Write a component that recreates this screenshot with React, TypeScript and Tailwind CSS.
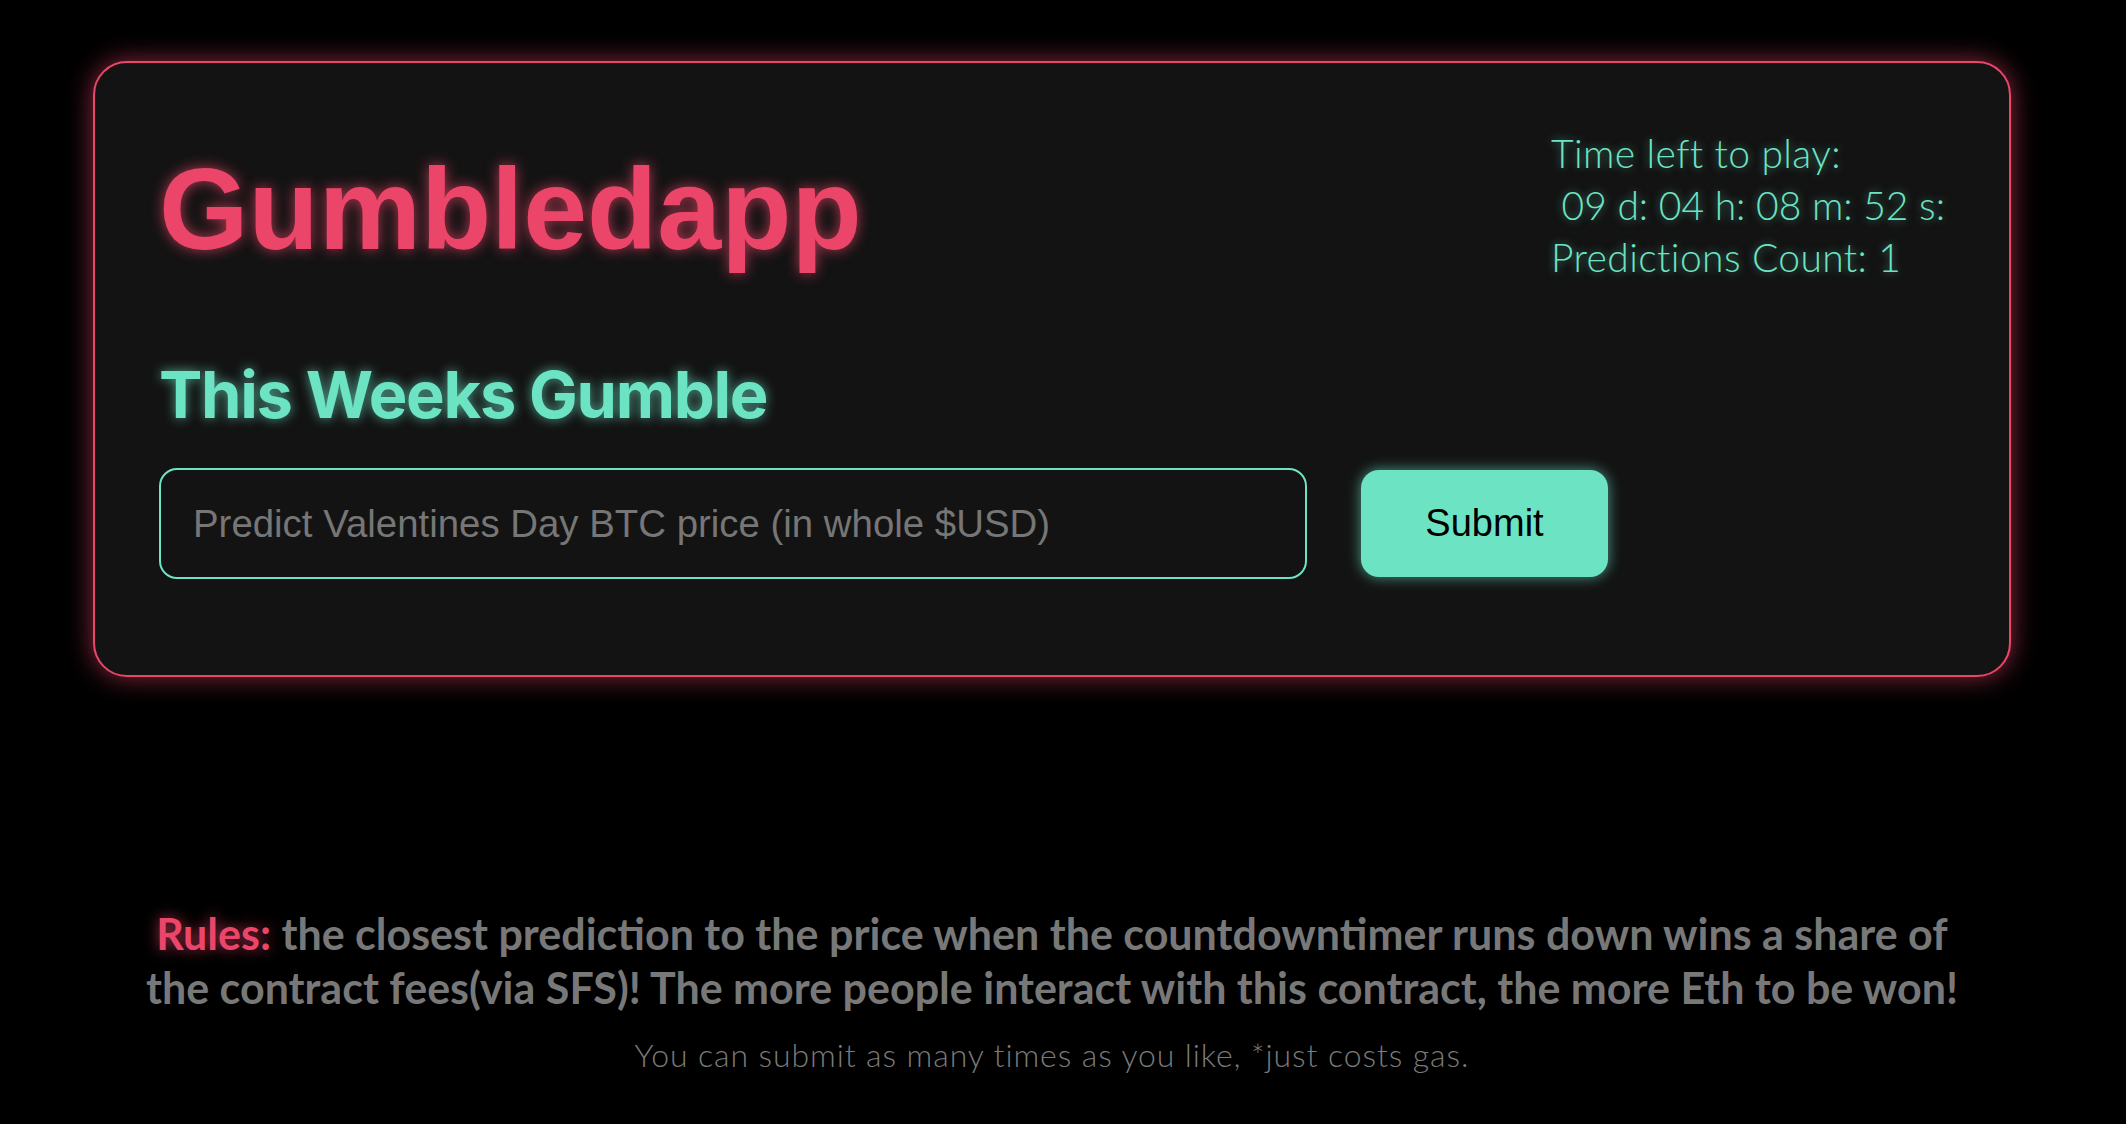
const pinkGlow = "[text-shadow:0_0_14px_rgba(235,70,105,0.75)]";

const Countdown = () => {
  return (
    <div className="font-['Lato',sans-serif] font-light text-[39px] leading-[52px] text-[#6ce4c4] [text-shadow:0_0_8px_rgba(108,228,196,0.55)]">
      <p className="tracking-[0.4px]">Time left to play:</p>
      <p className="whitespace-pre"> 09 d: 04 h: 08 m: 52 s:</p>
      <p className="tracking-[0.4px]">Predictions Count: 1</p>
    </div>
  );
};

const GumbleCard = () => {
  return (
    <div className="rounded-[34px] border-2 border-[#eb4669] bg-[#131313] px-16 pt-16 pb-24 shadow-[0_0_26px_rgba(235,70,105,0.6)]">
      <div className="flex items-start justify-between">
        <h1
          className={`mt-[25px] font-['Liberation_Sans',Arial,sans-serif] text-[115px] font-bold leading-none text-[#eb4669] ${pinkGlow}`}
        >
          Gumbledapp
        </h1>
        <Countdown />
      </div>
      <h2 className="mt-[79px] font-['Inter',sans-serif] text-[65px] font-bold leading-none tracking-[-1.3px] text-[#6ce4c4] [text-shadow:0_0_12px_rgba(108,228,196,0.7)]">
        This Weeks Gumble
      </h2>
      <div className="mt-[41px] flex items-center gap-[54px]">
        <input
          type="text"
          placeholder="Predict Valentines Day BTC price (in whole $USD)"
          className="h-[111px] w-[1148px] rounded-[18px] border-2 border-[#6ce4c4] bg-transparent px-8 font-['Liberation_Sans',Arial,sans-serif] text-[38.4px] text-white outline-none placeholder:text-[#767676]"
        />
        <button className="h-[107px] w-[247px] rounded-[18px] bg-[#6ce4c4] font-['Liberation_Sans',Arial,sans-serif] text-[38px] text-black shadow-[0_0_14px_rgba(108,228,196,0.65)]">
          Submit
        </button>
      </div>
    </div>
  );
};

export default function App() {
  return (
    <div className="min-h-[1124px] w-[2126px] bg-black pl-[93px] pr-[115px] pt-[61px]">
      <GumbleCard />
      <div className="mt-[230px] flex flex-col items-center text-center">
        <p className="font-['Lato',sans-serif] text-[43px] font-bold leading-[54px] text-[#787878]">
          <span className={`text-[#eb4669] ${pinkGlow}`}>Rules:</span> the closest prediction to the price
          when the countdowntimer runs down wins a share of
          <br />
          the contract fees(via SFS)! The more people interact with this contract, the more Eth to be won!
        </p>
        <p className="mt-[20px] font-['Lato',sans-serif] text-[32px] font-light leading-[40px] tracking-[0.9px] text-[#7a7a7a]">
          You can submit as many times as you like, *just costs gas.
        </p>
      </div>
    </div>
  );
}
